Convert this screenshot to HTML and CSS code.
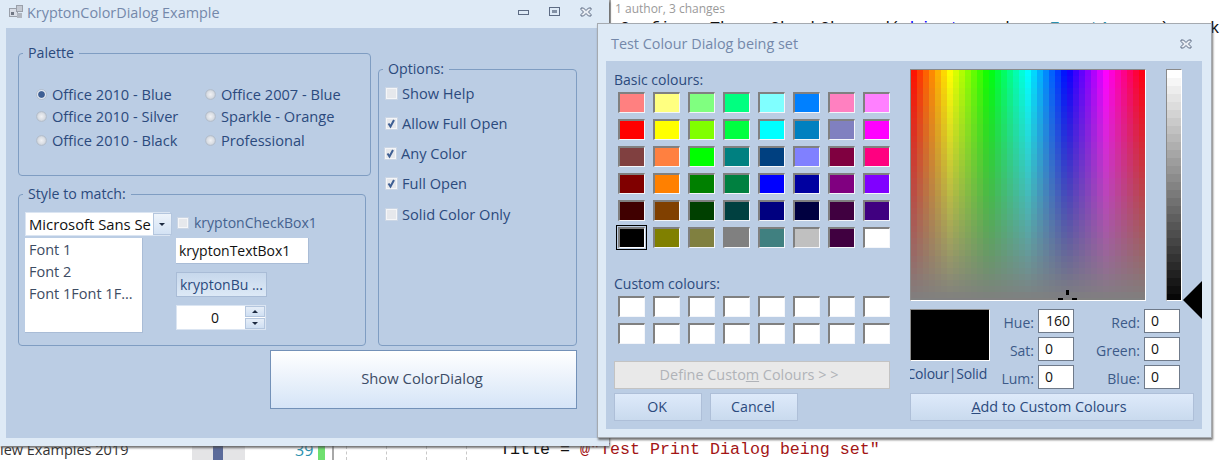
FILE: index.html
```html
<!DOCTYPE html>
<html lang="en">
<head>
    <meta charset="UTF-8">
    <title>KryptonColorDialog Example</title>
    <link rel="stylesheet" href="styles.css">
</head>
<body>
    <!-- Editor behind the windows -->
    <div class="code-top">
        <span class="gutter-line"></span>
        <div class="code-lens">1 author, 3 changes</div>
        <div class="code-head">ConfigureThemesCheckChanged(<span class="kw">object</span> sender, <span class="type">EventArgs</span> e)    k</div>
    </div>
    <div class="code-bottom">
        <span class="solution-name">iew Examples 2019</span>
        <span class="scroll-strip"><span class="scroll-thumb"></span></span>
        <span class="line-no">39</span>
        <span class="change-bar"></span>
        <span class="gutter-line gutter-line-low"></span>
        <div class="guides"><span></span><span></span><span></span><span></span></div>
        <span class="code-line">Title = <span class="str">@"Test Print Dialog being set"</span></span>
    </div>

    <!-- Example window -->
    <div class="window main-window">
        <div class="titlebar main-titlebar">
            <svg class="app-icon" width="14" height="14" viewBox="0 0 14 14">
                <rect x="0.5" y="3.5" width="8" height="8" fill="#d8dde6" stroke="#9aa0aa"/>
                <rect x="7.5" y="0.5" width="6" height="6" fill="#c4c9d2" stroke="#9aa0aa"/>
                <rect x="2" y="7" width="3" height="3" fill="#6f7683"/>
                <rect x="8" y="8" width="5" height="5" fill="#b0b6c0"/>
            </svg>
            <span class="title-text">KryptonColorDialog Example</span>
            <div class="win-controls">
                <svg width="11" height="6" viewBox="0 0 11 6"><rect x="0.5" y="1.500" width="10" height="4" fill="none" stroke="#5d6b83"/></svg>
                <svg width="11" height="10" viewBox="0 0 11 10"><rect x="0.5" y="0.5" width="10" height="8" fill="none" stroke="#5d6b83"/><rect x="3" y="3" width="5" height="3" fill="#5d6b83" opacity="0.7"/></svg>
                <svg width="12" height="10" viewBox="0 0 12 10"><path d="M1 1h2.500L6 3.500 8.500 1H11v1.500L8.500 5 11 7.500V9H8.500L6 6.500 3.500 9H1V7.500L3.500 5 1 2.500z" fill="#e9edf3" stroke="#5d6b83"/></svg>
            </div>
        </div>
        <div class="client">
            <div class="top-row">
                <div class="left-col">
                    <fieldset class="group palette">
                        <legend>Palette</legend>
                        <div class="palette-grid">
                            <label class="opt"><span class="radio radio-on"></span>Office 2010 - Blue</label>
                            <label class="opt"><span class="radio"></span>Office 2007 - Blue</label>
                            <label class="opt"><span class="radio"></span>Office 2010 - Silver</label>
                            <label class="opt"><span class="radio"></span>Sparkle - Orange</label>
                            <label class="opt"><span class="radio"></span>Office 2010 - Black</label>
                            <label class="opt"><span class="radio"></span>Professional</label>
                        </div>
                    </fieldset>
                    <fieldset class="group style-match">
                        <legend>Style to match:</legend>
                        <div class="style-grid">
                            <div class="combo">
                                <span class="combo-text">Microsoft Sans Se</span>
                                <span class="combo-btn"><span class="arrow-down"></span></span>
                            </div>
                            <label class="opt opt-faded"><span class="check check-small"></span>kryptonCheckBox1</label>
                            <ul class="listbox">
                                <li>Font 1</li>
                                <li>Font 2</li>
                                <li>Font 1Font 1F...</li>
                            </ul>
                            <div class="textbox">kryptonTextBox1</div>
                            <div class="small-btn">kryptonBu ...</div>
                            <div class="numeric">
                                <span class="numeric-val">0</span>
                                <span class="spin">
                                    <span class="spin-btn"><span class="arrow-up"></span></span>
                                    <span class="spin-btn"><span class="arrow-down"></span></span>
                                </span>
                            </div>
                        </div>
                    </fieldset>
                </div>
                <fieldset class="group options">
                    <legend>Options:</legend>
                    <div class="options-list">
                        <label class="opt opt-row"><span class="check"></span>Show Help</label>
                        <label class="opt opt-row"><span class="check"><svg class="tick" width="11" height="11" viewBox="0 0 11 11"><path d="M2.500 5.500L4.500 8.500L8 2" fill="none" stroke="#3f5f93" stroke-width="2"/></svg></span>Allow Full Open</label>
                        <label class="opt opt-row opt-nudge"><span class="check"><svg class="tick" width="11" height="11" viewBox="0 0 11 11"><path d="M2.500 5.500L4.500 8.500L8 2" fill="none" stroke="#3f5f93" stroke-width="2"/></svg></span>Any Color</label>
                        <label class="opt opt-row"><span class="check"><svg class="tick" width="11" height="11" viewBox="0 0 11 11"><path d="M2.500 5.500L4.500 8.500L8 2" fill="none" stroke="#3f5f93" stroke-width="2"/></svg></span>Full Open</label>
                        <label class="opt opt-row opt-last"><span class="check"></span>Solid Color Only</label>
                    </div>
                </fieldset>
            </div>
            <div class="show-btn">Show ColorDialog</div>
        </div>
    </div>

    <!-- Colour dialog -->
    <div class="window colour-dialog">
        <div class="titlebar dialog-titlebar">
            <span class="title-text">Test Colour Dialog being set</span>
            <div class="win-controls">
                <svg width="12" height="10" viewBox="0 0 12 10"><path d="M1 1h2.500L6 3.500 8.500 1H11v1.500L8.500 5 11 7.500V9H8.500L6 6.500 3.500 9H1V7.500L3.500 5 1 2.500z" fill="#e9edf3" stroke="#5d6b83"/></svg>
            </div>
        </div>
        <div class="dialog-client">
            <div class="dlg-left">
                <div class="dlg-label">Basic colours:</div>
                <div class="swatches" id="basic"></div>
                <div class="dlg-label custom-label">Custom colours:</div>
                <div class="swatches" id="custom"></div>
                <div class="dlg-btn define-btn"><span>Define Custo<u>m</u> Colours &gt; &gt;</span></div>
                <div class="ok-row">
                    <div class="dlg-btn ok-btn">OK</div>
                    <div class="dlg-btn ok-btn">Cancel</div>
                </div>
            </div>
            <div class="dlg-right">
                <div class="picker-row">
                    <div class="spectrum-wrap">
                        <canvas id="spectrum" width="234" height="230"></canvas>
                        <span class="cross cross-v"></span>
                        <span class="cross cross-l"></span>
                        <span class="cross cross-r"></span>
                    </div>
                    <div class="lum-wrap">
                        <canvas id="lum" width="14" height="230"></canvas>
                    </div>
                    <span class="lum-pointer"></span>
                </div>
                <div class="values-row">
                    <div class="preview-col">
                        <div class="preview"></div>
                        <div class="preview-label"><span>Colour|Solid</span></div>
                    </div>
                    <div class="fields">
                        <span class="field-label">Hue:</span><span class="field field-hue">160</span>
                        <span class="field-label">Red:</span><span class="field">0</span>
                        <span class="field-label">Sat:</span><span class="field">0</span>
                        <span class="field-label">Green:</span><span class="field">0</span>
                        <span class="field-label">Lum:</span><span class="field">0</span>
                        <span class="field-label">Blue:</span><span class="field">0</span>
                    </div>
                </div>
                <div class="dlg-btn add-btn"><span><u>A</u>dd to Custom Colours</span></div>
            </div>
        </div>
    </div>

    <script src="script.js"></script>
</body>
</html>
```
FILE: styles.css
```css
* {
    box-sizing: border-box;
}
body {
    margin: 0;
    width: 1221px;
    height: 460px;
    overflow: hidden;
    position: relative;
    background-color: #fff;
    font-family: "Open Sans", "Noto Sans", sans-serif;
    font-size: 14px;
    color: #2b4a7d;
}

/* editor behind */
.code-top {
    position: absolute;
    left: 609px;
    top: 0;
    width: 612px;
    height: 40px;
}
.gutter-line {
    position: absolute;
    left: 0;
    top: 0;
    width: 2px;
    height: 24px;
    background-color: #a8a8a8;
}
.code-lens {
    position: absolute;
    left: 6px;
    top: 0;
    font-size: 12px;
    line-height: 17px;
    color: #9a9a9a;
}
.code-head {
    position: absolute;
    left: 11px;
    top: 19px;
    font-family: "Liberation Mono", monospace;
    font-size: 16.67px;
    line-height: 20px;
    white-space: pre;
    color: #111;
}
.kw {
    color: #0000ff;
}
.type {
    color: #2b91af;
}
.code-bottom {
    position: absolute;
    left: 0;
    top: 440px;
    width: 1221px;
    height: 20px;
}
.solution-name {
    position: absolute;
    left: 0;
    top: 1px;
    font-size: 14.5px;
    line-height: 18px;
    color: #333;
}
.scroll-strip {
    position: absolute;
    left: 192px;
    top: 0;
    width: 53px;
    height: 20px;
    background-color: #e4e4e6;
}
.scroll-thumb {
    position: absolute;
    left: 21px;
    top: 0;
    width: 10px;
    height: 20px;
    background-color: #5b6b9a;
}
.line-no {
    position: absolute;
    left: 295px;
    top: 0;
    font-size: 16px;
    line-height: 20px;
    color: #2b91af;
}
.change-bar {
    position: absolute;
    left: 318px;
    top: 0;
    width: 7px;
    height: 20px;
    background-color: #6fe06f;
}
.gutter-line-low {
    left: 332px;
    height: 20px;
}
.guides {
    position: absolute;
    left: 346px;
    top: 6px;
    display: flex;
    gap: 39px;
}
.guides span {
    height: 14px;
    border-left: 1px dashed #c8c8c8;
}
.code-line {
    position: absolute;
    left: 500px;
    top: 0;
    font-family: "Liberation Mono", monospace;
    font-size: 16.67px;
    line-height: 20px;
    white-space: pre;
    color: #111;
}
.str {
    color: #a31515;
}

/* windows */
.window {
    position: absolute;
    background-color: #deeaf6;
    box-shadow: 1px 2px 2px rgba(70, 70, 70, 0.75);
}
.main-window {
    left: 0;
    top: 0;
    width: 609px;
    height: 446px;
}
.colour-dialog {
    left: 597px;
    top: 23px;
    width: 615px;
    height: 415px;
    border: 1px solid #a5aab0;
}
.titlebar {
    display: flex;
    align-items: center;
    height: 28px;
    padding-left: 9px;
}
.main-titlebar {
    padding-bottom: 4px;
}
.dialog-titlebar {
    height: 37px;
    padding-left: 13px;
    padding-top: 2px;
}
.app-icon {
    margin-right: 4px;
}
.title-text {
    font-size: 14.4px;
    color: #7488aa;
}
.win-controls {
    margin-left: auto;
    display: flex;
    align-items: center;
    gap: 20px;
}
.main-window .win-controls {
    padding-right: 17px;
}
.dialog-titlebar .win-controls {
    padding-right: 19px;
}

.client {
    margin: 0 0 0 6px;
    width: 591px;
    height: 410px;
    padding: 15px 0 0 12px;
    background-color: #bbcde4;
}
.top-row {
    display: flex;
    gap: 7px;
    align-items: flex-start;
}
.left-col {
    display: flex;
    flex-direction: column;
    gap: 8px;
    width: 353px;
}

/* group boxes */
.group {
    margin: 0;
    padding: 0;
    min-width: 0;
    border: 1px solid #7f9dc2;
    border-radius: 4px;
}
.group legend {
    margin-left: 4px;
    padding: 0 5px;
    font-size: 14.2px;
    line-height: 20px;
    color: #2b4a7d;
}
.palette {
    width: 353px;
    height: 133px;
}
.style-match {
    width: 348px;
    height: 162px;
}
.options {
    margin-top: 16px;
    width: 199px;
    height: 287px;
}
.options-list {
    padding-left: 6px;
}

/* radios + checks */
.palette-grid {
    display: grid;
    grid-template-columns: 169px 1fr;
    grid-template-rows: 22px 22px 26px;
    align-items: center;
    padding: 21px 0 0 17px;
}
.opt {
    display: flex;
    align-items: center;
    padding-bottom: 2px;
    white-space: nowrap;
    font-size: 14.6px;
    line-height: 20px;
    color: #2b4a7d;
}
.opt-faded {
    padding-bottom: 0;
    font-size: 14px;
    color: #45628f;
    margin-left: 7px;
    height: 22px;
}
.radio {
    flex: none;
    width: 11px;
    height: 11px;
    margin-right: 5px;
    border-radius: 50%;
    background: radial-gradient(circle, #f0f1f4 0, #d9dde3 55%, #aab3c0 100%);
    border: 1px solid #b4bfcd;
}
.radio-on {
    background: radial-gradient(circle, #3f5f93 0, #3f5f93 45%, #dfe6f0 60%, #eef2f7 100%);
}
.check {
    flex: none;
    position: relative;
    width: 13px;
    height: 13px;
    margin-right: 4px;
    border: 1px solid #cbd6e5;
    background-color: #e6e8ec;
    box-shadow: inset 0 0 0 1px #f5f6f8;
}
.check-small {
    width: 12px;
    height: 12px;
    margin-right: 5px;
}
.tick {
    display: block;
}
.opt-row {
    height: 30px;
}
.opt-nudge {
    margin-left: -1px;
}
.opt-last {
    margin-top: 1px;
}

/* style to match */
.style-grid {
    display: grid;
    grid-template-columns: 118px 27px 1fr;
    grid-template-rows: 26px 34px 33px 27px;
    align-items: start;
    padding: 8px 0 0 6px;
}
.combo {
    grid-column: 1 / 3;
    display: flex;
    height: 24px;
    background-color: #fff;
    border: 1px solid #dbe5f2;
}
.combo-text {
    flex: 1;
    white-space: nowrap;
    padding-left: 3px;
    font-size: 14.8px;
    line-height: 23px;
    color: #111;
}
.combo-btn {
    flex: none;
    width: 19px;
    display: flex;
    align-items: center;
    justify-content: center;
    margin-left: 2px;
    background: linear-gradient(#eef4fb, #d3e2f4);
    border: 1px solid #b4c6de;
}
.arrow-down {
    width: 0;
    height: 0;
    border-left: 3px solid transparent;
    border-right: 3px solid transparent;
    border-top: 3px solid #1d2a40;
}
.arrow-up {
    width: 0;
    height: 0;
    border-left: 3px solid transparent;
    border-right: 3px solid transparent;
    border-bottom: 3px solid #1d2a40;
}
.listbox {
    grid-column: 1;
    grid-row: 2 / 5;
    list-style: none;
    margin: 0;
    padding: 1px 0 0 4px;
    height: 95px;
    font-size: 14.5px;
    background-color: #fff;
    border: 1px solid #a9bcd6;
    border-width: 0 1px 1px 0;
    color: #3d4c63;
}
.listbox li {
    height: 22px;
    line-height: 22px;
    white-space: nowrap;
}
.textbox {
    grid-column: 3;
    grid-row: 2;
    margin-left: 6px;
    width: 133px;
    height: 26px;
    padding-left: 3px;
    line-height: 25px;
    background-color: #fff;
    border-right: 1px solid #a9bcd6;
    border-bottom: 1px solid #a9bcd6;
    color: #111;
}
.small-btn {
    grid-column: 3;
    grid-row: 3;
    margin-left: 6px;
    width: 91px;
    height: 25px;
    padding-left: 3px;
    line-height: 23px;
    white-space: nowrap;
    color: #2b4a7d;
    border: 1px solid #a9bcd6;
    background: linear-gradient(#c7d8ec, #dde9f6);
}
.numeric {
    grid-column: 3;
    grid-row: 4;
    margin-left: 6px;
    display: flex;
    width: 90px;
    height: 25px;
    background-color: #fff;
    border: 1px solid #dbe5f2;
}
.numeric-val {
    flex: 1;
    text-align: center;
    padding-left: 8px;
    line-height: 23px;
    color: #111;
}
.spin {
    flex: none;
    width: 20px;
    display: flex;
    flex-direction: column;
    gap: 1px;
}
.spin-btn {
    flex: 1;
    display: flex;
    align-items: center;
    justify-content: center;
    background: linear-gradient(#e6eef8, #cfdff2);
    border: 1px solid #b4c6de;
}

.show-btn {
    margin: 4px 0 0 252px;
    width: 307px;
    height: 59px;
    padding: 0 3px 3px 0;
    display: flex;
    align-items: center;
    justify-content: center;
    font-size: 14.8px;
    border: 1px solid #7391b8;
    background: linear-gradient(#ffffff, #d5e4f7);
    color: #3c4c66;
}

/* colour dialog */
.dialog-client {
    display: flex;
    margin-left: 8px;
    width: 596px;
    height: 368px;
    padding: 8px 0 0 8px;
    background-color: #bbcde4;
}
.dlg-left {
    width: 276px;
    flex: none;
}
.dlg-label {
    height: 23px;
    font-size: 14px;
    line-height: 22px;
    color: #2b4a7d;
}
.custom-label {
    margin-top: 25px;
}
.swatches {
    display: grid;
    grid-template-columns: repeat(8, 27px);
    grid-auto-rows: 21px;
    column-gap: 8px;
    row-gap: 6px;
    margin-left: 4px;
}
.swatch {
    border-style: solid;
    border-width: 2px 1px 1px 2px;
    border-color: #808080 #f4f6fa #f4f6fa #808080;
}
.swatch-picked {
    outline: 1px solid #000;
    outline-offset: 1px;
    border-color: #808080 #fff #fff #808080;
}
.swatch-empty {
    background-color: #fff;
}
.dlg-btn {
    display: flex;
    align-items: center;
    justify-content: center;
    height: 28px;
    padding-bottom: 2px;
    font-size: 14.2px;
    border: 1px solid #aebfd8;
    background: linear-gradient(#deeafa, #c9daee);
    color: #2b4a7d;
    white-space: nowrap;
}
.define-btn {
    margin-top: 17px;
    width: 276px;
    padding-right: 6px;
    font-size: 14.4px;
    color: #b0b3b8;
    background: #e9e9e9;
    border-color: #c3c3c3;
}
.ok-row {
    display: flex;
    gap: 8px;
    margin-top: 4px;
}
.ok-btn {
    width: 88px;
    padding-right: 2px;
}
.dlg-right {
    margin-left: 20px;
    width: 284px;
    flex: none;
}
.picker-row {
    position: relative;
    display: flex;
    gap: 20px;
    height: 232px;
}
.spectrum-wrap {
    position: relative;
    width: 236px;
    height: 232px;
    border-style: solid;
    border-width: 1px;
    border-color: #8a8a8a #fff #fff #8a8a8a;
}
.spectrum-wrap canvas,
.lum-wrap canvas {
    display: block;
}
.cross {
    position: absolute;
    background-color: #000;
}
.cross-v {
    left: 155px;
    top: 220px;
    width: 3px;
    height: 5px;
}
.cross-l {
    left: 147px;
    top: 228px;
    width: 5px;
    height: 2px;
}
.cross-r {
    left: 161px;
    top: 228px;
    width: 5px;
    height: 2px;
}
.lum-wrap {
    width: 16px;
    height: 232px;
    border-style: solid;
    border-width: 1px;
    border-color: #8a8a8a #fff #fff #8a8a8a;
}
.lum-pointer {
    position: absolute;
    left: 273px;
    top: 212px;
    width: 0;
    height: 0;
    border-top: 19px solid transparent;
    border-bottom: 19px solid transparent;
    border-right: 19px solid #000;
}
.values-row {
    display: flex;
    margin-top: 8px;
}
.preview-col {
    width: 80px;
    flex: none;
}
.preview {
    height: 52px;
    background-color: #000;
    border-style: solid;
    border-width: 1px;
    border-color: #8a8a8a #fff #fff #8a8a8a;
}
.preview-label {
    margin-top: 3px;
    height: 20px;
    overflow: hidden;
    display: flex;
    justify-content: flex-end;
    padding-right: 3px;
    white-space: nowrap;
    letter-spacing: -0.2px;
    line-height: 20px;
    color: #2b4a7d;
}
.fields {
    display: grid;
    grid-template-columns: 48px 36px 70px 36px;
    grid-auto-rows: 24px;
    row-gap: 4px;
}
.field-label {
    text-align: right;
    padding: 3px 4px 0 0;
    line-height: 21px;
    color: #3c5a88;
}
.field {
    display: block;
    padding-left: 6px;
    line-height: 22px;
    background-color: #fff;
    border: 1px solid #6f7a8a;
    color: #111;
}
.field-hue {
    padding-left: 7px;
}
.add-btn {
    margin-top: 4px;
    width: 284px;
    padding-right: 6px;
    font-size: 14.4px;
}
```
FILE: script.js
```js
// Windows style colour picker, drawn in blocks
function hslRgb(h, s, l) {
    return `hsl(${h / 240 * 360}, ${s / 240 * 100}%, ${l / 240 * 100}%)`;
}

const spec = document.getElementById('spectrum').getContext('2d');
const stepX = 6, stepY = 6;
for (let x = 0; x < 234; x += stepX) {
    for (let y = 0; y < 230; y += stepY) {
        spec.fillStyle = hslRgb((x + stepX / 2) / 234 * 240, 240 - (y + stepY / 2) / 230 * 240, 120);
        spec.fillRect(x, y, stepX, stepY);
    }
}

const lum = document.getElementById('lum').getContext('2d');
for (let y = 0; y < 230; y += 8) {
    lum.fillStyle = hslRgb(160, 0, 240 - (y / 230) * 240);
    lum.fillRect(0, y, 14, 8);
}

// Basic colours
const basicColours = [
    '#ff8080', '#ffff80', '#80ff80', '#00ff80', '#80ffff', '#0080ff', '#ff80c0', '#ff80ff',
    '#ff0000', '#ffff00', '#80ff00', '#00ff40', '#00ffff', '#0080c0', '#8080c0', '#ff00ff',
    '#804040', '#ff8040', '#00ff00', '#008080', '#004080', '#8080ff', '#800040', '#ff0080',
    '#800000', '#ff8000', '#008000', '#008040', '#0000ff', '#0000a0', '#800080', '#8000ff',
    '#400000', '#804000', '#004000', '#004040', '#000080', '#000040', '#400040', '#400080',
    '#000000', '#808000', '#808040', '#808080', '#408080', '#c0c0c0', '#400040', '#ffffff'
];

const basic = document.getElementById('basic');
basicColours.forEach((c, i) => {
    const cls = i === 40 ? 'swatch swatch-picked' : 'swatch';
    basic.innerHTML += `<div class="${cls}" style="background-color: ${c};"></div>`;
});

const custom = document.getElementById('custom');
for (let i = 0; i < 16; i++) {
    custom.innerHTML += '<div class="swatch swatch-empty"></div>';
}
```
